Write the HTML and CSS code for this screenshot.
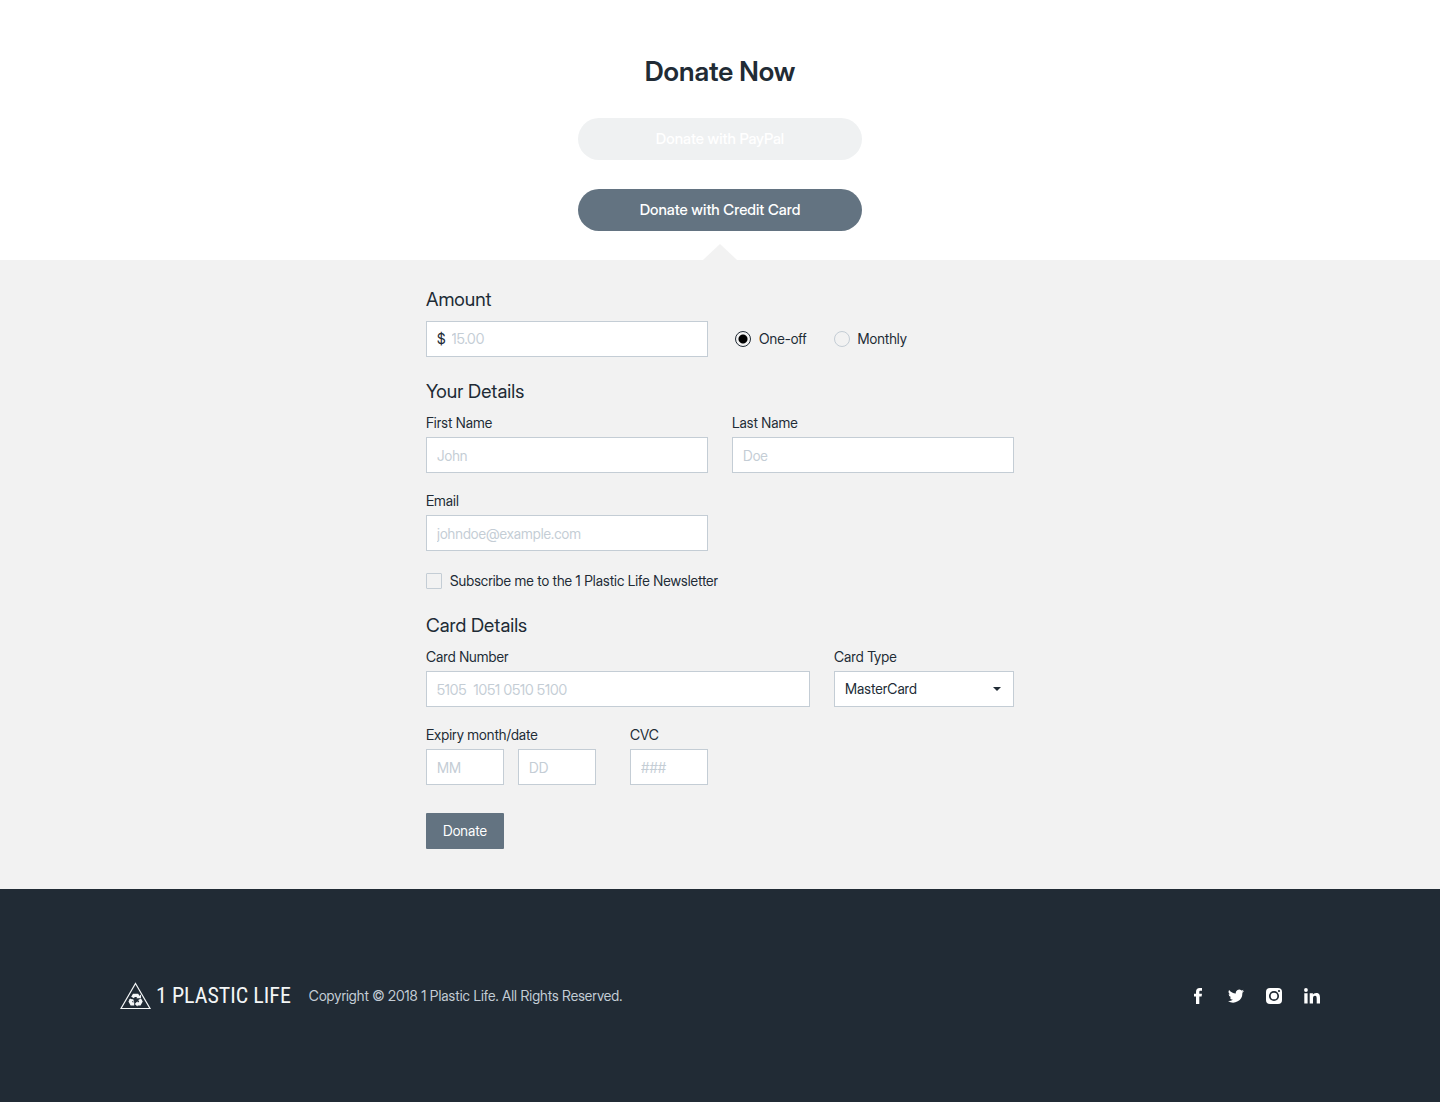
FILE: index.html
```
<!DOCTYPE html>
<html lang="en">
<head>
<meta charset="utf-8">
<meta name="viewport" content="width=device-width, initial-scale=1">
<title>Donate Now – 1 Plastic Life</title>
<link rel="stylesheet" href="styles.css">
</head>
<body>
<header class="intro">
  <h1 class="intro-title">Donate Now</h1>
  <div class="methods">
    <button type="button" class="method method-muted">Donate with PayPal</button>
    <button type="button" class="method">Donate with Credit Card</button>
  </div>
</header>

<main class="panel">
  <svg class="panel-pointer" width="34" height="16" viewBox="0 0 34 16" aria-hidden="true"><path d="M0 16 17 0l17 16z" fill="#f2f2f2"/></svg>
  <form class="form">
    <section class="section">
      <h2 class="section-title" id="amount-title">Amount</h2>
      <div class="row amount-row">
        <div class="money">
          <span class="money-sign" aria-hidden="true">$</span>
          <input class="money-input" type="text" placeholder="15.00" aria-labelledby="amount-title">
        </div>
        <div class="radios" role="radiogroup" aria-label="Frequency">
          <label class="choice"><input class="radio" type="radio" name="frequency" checked>One-off</label>
          <label class="choice"><input class="radio" type="radio" name="frequency">Monthly</label>
        </div>
      </div>
    </section>

    <section class="section">
      <h2 class="section-title">Your Details</h2>
      <div class="fields">
        <div class="row halves">
          <div class="field">
            <label class="label" for="first-name">First Name</label>
            <input class="input" id="first-name" type="text" placeholder="John">
          </div>
          <div class="field">
            <label class="label" for="last-name">Last Name</label>
            <input class="input" id="last-name" type="text" placeholder="Doe">
          </div>
        </div>
        <div class="row halves">
          <div class="field">
            <label class="label" for="email">Email</label>
            <input class="input" id="email" type="email" placeholder="johndoe@example.com">
          </div>
        </div>
        <label class="choice newsletter"><input class="checkbox" type="checkbox">Subscribe me to the 1 Plastic Life Newsletter</label>
      </div>
    </section>

    <section class="section">
      <h2 class="section-title">Card Details</h2>
      <div class="fields">
        <div class="row card-row">
          <div class="field">
            <label class="label" for="card-number">Card Number</label>
            <input class="input" id="card-number" type="text" placeholder="5105  1051 0510 5100">
          </div>
          <div class="field">
            <label class="label" for="card-type">Card Type</label>
            <div class="select-wrap">
              <select class="input select" id="card-type"><option>MasterCard</option><option>Visa</option></select>
              <svg class="caret" width="8" height="4" viewBox="0 0 8 4" aria-hidden="true"><path d="M0 0h8L4 4z" fill="#212b35"/></svg>
            </div>
          </div>
        </div>
        <div class="expiry-row">
          <div class="field">
            <label class="label" for="expiry-month">Expiry month/date</label>
            <div class="pair">
              <input class="input short" id="expiry-month" type="text" placeholder="MM">
              <input class="input short" type="text" placeholder="DD" aria-label="Expiry date">
            </div>
          </div>
          <div class="field">
            <label class="label" for="cvc">CVC</label>
            <input class="input short" id="cvc" type="text" placeholder="###">
          </div>
        </div>
      </div>
    </section>

    <button type="submit" class="submit">Donate</button>
  </form>
</main>

<footer class="footer">
  <a class="brand" href="#">
    <svg width="32" height="28" viewBox="0 0 32 28" fill="none" aria-hidden="true">
      <path d="M15.500 1.500 30 26.500H1z" stroke="#f4f6f7" stroke-width="1.200"/>
      <g stroke="#f4f6f7" stroke-width="3.200">
        <path d="M12.600 15.500 13.900 13.300h3.400l1.300 2.200"/>
        <path d="M19.600 17.200l1.300 2.300-1.300 2.400h-3"/>
        <path d="M14.200 21.900h-2.600l-1.300-2.400 1.200-2.100"/>
      </g>
      <path d="M16.400 16.300h4.600v-3.900zM17.600 19.200v5.400L14.800 21.900zM8.600 17.200h4.600l1 2.900z" fill="#f4f6f7"/>
    </svg>
    <span class="brand-name">1 PLASTIC LIFE</span>
  </a>
  <p class="copyright">Copyright © 2018 1 Plastic Life. All Rights Reserved.</p>
  <nav class="social" aria-label="Social media">
    <a class="social-link" href="#" aria-label="Facebook"><svg width="16" height="16" viewBox="0 0 16 16"><path d="M6 16V8.600H4V5.700h2V4c0-2.600 1.300-4 3.700-4H12v2.800h-1.400c-1 0-1.300.4-1.300 1.300v1.600H12l-.4 2.900H9.300V16z"/></svg></a>
    <a class="social-link" href="#" aria-label="Twitter"><svg width="16" height="16" viewBox="0 0 16 16"><path d="M16 3.040a6.600 6.600 0 0 1-1.890.52 3.300 3.300 0 0 0 1.450-1.820 6.600 6.600 0 0 1-2.090.8 3.280 3.280 0 0 0-5.590 2.990A9.300 9.300 0 0 1 1.110 2.100a3.280 3.280 0 0 0 1.020 4.380 3.300 3.300 0 0 1-1.490-.41v.04a3.280 3.280 0 0 0 2.630 3.220 3.300 3.300 0 0 1-1.480.06 3.280 3.280 0 0 0 3.070 2.280A6.600 6.600 0 0 1 0 13.030 9.300 9.300 0 0 0 14.360 4.740 6.700 6.700 0 0 0 16 3.040z"/></svg></a>
    <a class="social-link" href="#" aria-label="Instagram"><svg width="16" height="16" viewBox="0 0 16 16"><rect width="16" height="16" rx="4"/><circle cx="8" cy="8" r="4.200" fill="none" stroke="#212b35" stroke-width="1.700"/><circle cx="13" cy="3" r="1.100" fill="#212b35"/></svg></a>
    <a class="social-link" href="#" aria-label="LinkedIn"><svg width="16" height="16" viewBox="0 0 16 16"><path d="M.3 5.300h3.300V15.500H.3zM5.700 5.300h3.200v1.500C9.400 5.800 10.600 5 12.100 5c3.100 0 3.900 2 3.900 4.700v5.800h-3.300v-5c0-1.500-.2-2.800-1.700-2.800-1.600 0-2 1.200-2 2.700v5.100H5.700z"/><circle cx="1.950" cy="2" r="1.900"/></svg></a>
  </nav>
</footer>
</body>
</html>
```
FILE: styles.css
```
*, *::before, *::after { box-sizing: border-box; }

body {
  margin: 0;
  min-height: 100vh;
  display: flex;
  flex-direction: column;
  background: #fff;
  color: #212b35;
  font-family: "Inter Display", Inter, Roboto, sans-serif;
  font-size: 14px;
  line-height: 20px;
}

h1, h2, p { margin: 0; }

button, input, select { font: inherit; color: inherit; }

.intro {
  display: flex;
  flex-direction: column;
  align-items: center;
  gap: 28px;
  padding: 54px 24px 29px;
}

.intro-title { font-size: 27px; line-height: 36px; font-weight: 600; }

.methods {
  display: grid;
  gap: 29px;
  width: 100%;
  max-width: 284px;
}

.method {
  height: 42px;
  padding: 0;
  border: 0;
  border-radius: 21px;
  background: #637381;
  color: #fff;
  font-size: 15px;
  font-weight: 500;
  cursor: pointer;
}

.method-muted { background: #eff1f2; }

.panel {
  position: relative;
  padding: 27px 24px 40px;
  background: #f2f2f2;
}

.panel-pointer {
  position: absolute;
  bottom: 100%;
  left: 50%;
  transform: translateX(-50%);
}

.form { max-width: 588px; margin: 0 auto; }

.section { margin-bottom: 22px; }

.section:last-of-type { margin-bottom: 28px; }

.section-title {
  margin-bottom: 8px;
  font-size: 19px;
  line-height: 26px;
  font-weight: 400;
}

.fields { display: grid; gap: 18px; }

.row { display: grid; gap: 24px; }

.halves, .amount-row { grid-template-columns: 1fr 1fr; }

.card-row { grid-template-columns: 1fr 180px; }

.field { display: grid; gap: 4px; }

.label { justify-self: start; }

.input, .money {
  width: 100%;
  height: 36px;
  padding: 0 10px;
  border: 1px solid #c4cdd5;
  border-radius: 0;
  background: #fff;
}

.input::placeholder, .money-input::placeholder { color: #c4cdd5; opacity: 1; }

.money { display: flex; align-items: center; gap: 6px; }

.money-input {
  flex: 1;
  min-width: 0;
  padding: 0;
  border: 0;
  background: none;
}

.radios { display: flex; align-items: center; gap: 27px; padding-left: 3px; }

.choice { display: flex; align-items: center; gap: 8px; }

.newsletter { justify-self: start; margin-top: 2px; }

.radio, .checkbox {
  appearance: none;
  width: 16px;
  height: 16px;
  margin: 0;
  border: 1px solid #c4cdd5;
}

.radio { border-radius: 50%; }

.radio:checked {
  border-color: #212b35;
  background: radial-gradient(circle, #000 4px, transparent 5px);
}

.checkbox { border-radius: 1px; }

.checkbox:checked { background: #212b35; }

.select-wrap { position: relative; }

.select { appearance: none; }

.caret {
  position: absolute;
  top: 16px;
  right: 13px;
  pointer-events: none;
}

.expiry-row { display: flex; flex-wrap: wrap; gap: 18px 34px; }

.pair { display: flex; gap: 14px; }

.short { width: 78px; }

.submit {
  width: 78px;
  height: 36px;
  padding: 0;
  border: 0;
  border-radius: 1px;
  background: #637381;
  color: #fff;
  cursor: pointer;
}

.footer {
  flex: 1;
  display: flex;
  flex-wrap: wrap;
  align-items: center;
  gap: 18px;
  padding: 90px 120px;
  background: #212b35;
}

.brand {
  display: flex;
  align-items: center;
  gap: 4px;
  color: #f4f6f7;
  text-decoration: none;
}

.brand-name {
  font-family: "Roboto Condensed", Roboto, sans-serif;
  font-size: 22px;
  font-weight: 400;
  line-height: 32px;
}

.copyright { color: #c4cdd5; }

.social { display: flex; gap: 22px; margin-left: auto; }

.social-link { display: block; height: 16px; }

.social-link svg { display: block; fill: #fff; }
```
